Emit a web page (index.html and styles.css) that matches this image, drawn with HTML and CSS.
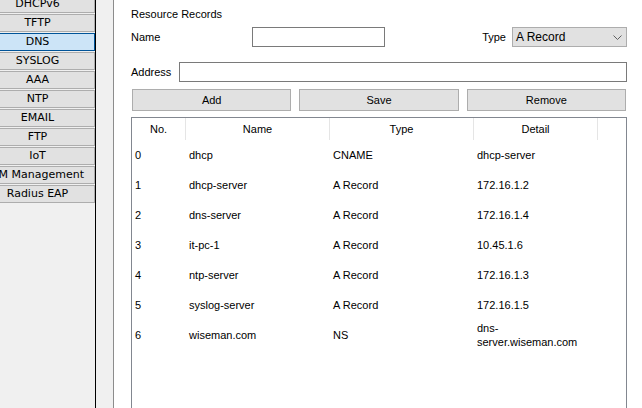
FILE: index.html
```html
<!DOCTYPE html>
<html>
<head>
<meta charset="utf-8">
<link rel="stylesheet" href="styles.css">
</head>
<body>
<div class="app">
  <div class="side">
    <div class="svc-list">
      <div class="svc">DHCPv6</div>
      <div class="svc">TFTP</div>
      <div class="svc sel">DNS</div>
      <div class="svc">SYSLOG</div>
      <div class="svc">AAA</div>
      <div class="svc">NTP</div>
      <div class="svc">EMAIL</div>
      <div class="svc">FTP</div>
      <div class="svc">IoT</div>
      <div class="svc">VM Management</div>
      <div class="svc">Radius EAP</div>
    </div>
  </div>
  <div class="strip"></div>
  <div class="main">
    <div class="title">Resource Records</div>
    <div class="row1">
      <span class="lbl name-lbl">Name</span>
      <div class="input name-in"></div>
      <span class="spacer"></span>
      <span class="lbl type-lbl">Type</span>
      <div class="select">
        <span>A Record</span>
        <svg class="chev" width="9" height="5" viewBox="0 0 9 5"><polyline points="0.5,0.5 4.5,4.5 8.5,0.5" fill="none" stroke="#606060" stroke-width="1"/></svg>
      </div>
    </div>
    <div class="sep"></div>
    <div class="row2">
      <span class="lbl addr-lbl">Address</span>
      <div class="input addr-in"></div>
    </div>
    <div class="btns">
      <div class="btn">Add</div>
      <div class="btn">Save</div>
      <div class="btn">Remove</div>
    </div>
    <div class="table">
      <div class="trow thead">
        <div class="th">No.</div>
        <div class="th">Name</div>
        <div class="th">Type</div>
        <div class="th">Detail</div>
        <div class="th last"></div>
      </div>
      <div class="trow"><div class="td">0</div><div class="td">dhcp</div><div class="td">CNAME</div><div class="td">dhcp-server</div><div class="td"></div></div>
      <div class="trow"><div class="td">1</div><div class="td">dhcp-server</div><div class="td">A Record</div><div class="td">172.16.1.2</div><div class="td"></div></div>
      <div class="trow"><div class="td">2</div><div class="td">dns-server</div><div class="td">A Record</div><div class="td">172.16.1.4</div><div class="td"></div></div>
      <div class="trow"><div class="td">3</div><div class="td">it-pc-1</div><div class="td">A Record</div><div class="td">10.45.1.6</div><div class="td"></div></div>
      <div class="trow"><div class="td">4</div><div class="td">ntp-server</div><div class="td">A Record</div><div class="td">172.16.1.3</div><div class="td"></div></div>
      <div class="trow"><div class="td">5</div><div class="td">syslog-server</div><div class="td">A Record</div><div class="td">172.16.1.5</div><div class="td"></div></div>
      <div class="trow"><div class="td">6</div><div class="td">wiseman.com</div><div class="td">NS</div><div class="td">dns-server.wiseman.com</div><div class="td"></div></div>
    </div>
  </div>
</div>
</body>
</html>
```
FILE: styles.css
```css
html, body {
  margin: 0;
  padding: 0;
}
body {
  width: 642px;
  height: 408px;
  overflow: hidden;
  font-family: "Liberation Sans", Arial, sans-serif;
  font-size: 11px;
  color: #000;
  background: #fff;
}
.app {
  display: flex;
  height: 408px;
}
.side {
  width: 95px;
  flex: none;
  background: #f0f0f0;
  border-right: 1px solid #000;
  overflow: hidden;
}
.svc-list {
  margin-top: -5px;
  margin-left: -20px;
  width: 115px;
}
.svc {
  box-sizing: border-box;
  height: 18px;
  margin-bottom: 1px;
  border: 1px solid #adadad;
  background: #e1e1e1;
  font-family: "DejaVu Sans", Verdana, sans-serif;
  font-size: 11px;
  line-height: 16px;
  text-align: center;
  white-space: nowrap;
  color: #000;
}
.svc.sel {
  background: #cce4f7;
  border-color: #005499;
}
.strip {
  width: 17px;
  flex: none;
  background: #f0f0f0;
  border-right: 1px solid #8c8c8c;
}
.main {
  flex: 1;
  display: flex;
  flex-direction: column;
  padding: 8px 15px 0 17px;
  overflow: hidden;
  background: #fff;
}
.title {
  line-height: 13px;
  height: 13px;
}
.row1 {
  display: flex;
  align-items: center;
  height: 20px;
  margin-top: 6px;
}
.lbl {
  line-height: 13px;
}
.name-lbl {
  width: 121px;
  flex: none;
}
.input {
  box-sizing: border-box;
  height: 20px;
  border: 1px solid #7a7a7a;
  background: #fff;
}
.name-in {
  width: 133px;
  flex: none;
}
.spacer {
  flex: 1;
}
.type-lbl {
  margin-right: 6px;
}
.select {
  box-sizing: border-box;
  width: 115px;
  height: 20px;
  border: 1px solid #adadad;
  background: #e1e1e1;
  display: flex;
  align-items: center;
  justify-content: space-between;
  padding: 0 4px 0 3px;
  font-size: 12px;
}
.chev {
  display: block;
}
.sep {
  height: 1px;
  background: #a0a0a0;
  margin-top: 6px;
}
.row2 {
  display: flex;
  align-items: center;
  height: 20px;
  margin-top: 9px;
}
.addr-lbl {
  width: 48px;
  flex: none;
}
.addr-in {
  flex: 1;
}
.btns {
  display: grid;
  grid-template-columns: 1fr 1fr 1fr;
  column-gap: 8px;
  padding: 0 1px;
  margin-top: 7px;
}
.btn {
  box-sizing: border-box;
  height: 22px;
  border: 1px solid #adadad;
  background: #e1e1e1;
  text-align: center;
  line-height: 20px;
}
.table {
  margin-top: 6px;
  height: 340px;
  flex: none;
  border: 1px solid #828790;
  background: #fff;
}
.trow {
  display: grid;
  grid-template-columns: 54px 144px 144px 124px 1fr;
  height: 30px;
}
.thead {
  height: 22px;
}
.th {
  box-sizing: border-box;
  border-right: 1px solid #e5e5e5;
  text-align: center;
  line-height: 22px;
}
.th.last {
  border-right: none;
}
.td {
  box-sizing: border-box;
  display: flex;
  align-items: center;
  padding: 0 3px;
  line-height: 14px;
}
```
